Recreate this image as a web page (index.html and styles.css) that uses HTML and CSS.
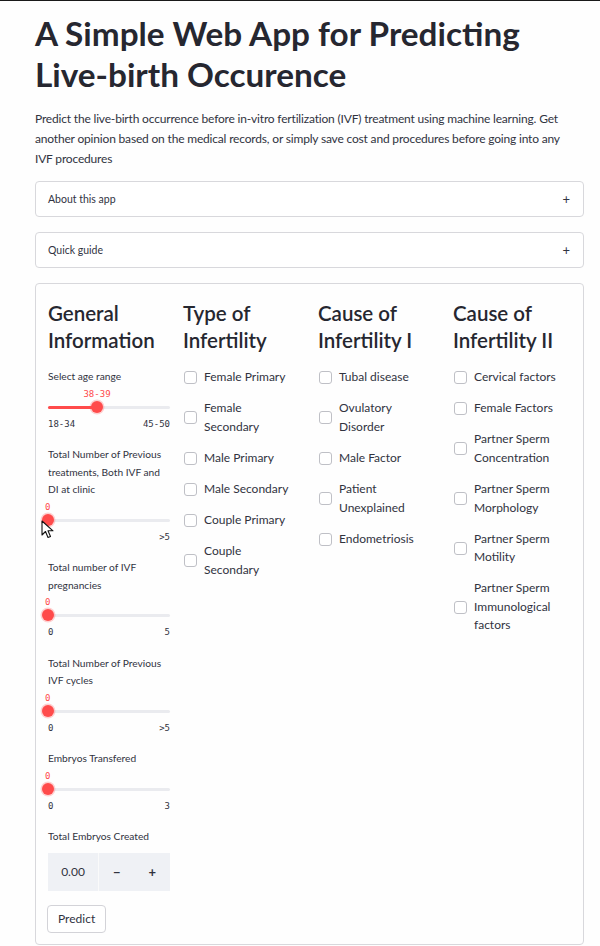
FILE: index.html
```html
<!DOCTYPE html>
<html>
<head>
<meta charset="utf-8">
<link rel="stylesheet" href="styles.css">
</head>
<body>
<main class="main">
  <h1 class="title">A Simple Web App for Predicting<br>Live-birth Occurence</h1>
  <p class="intro"><span>Predict the live-birth occurrence before in-vitro fertilization (IVF) treatment using machine learning. Get</span> <span>another opinion based on the medical records, or simply save cost and procedures before going into any</span> <span>IVF procedures</span></p>

  <div class="expander"><span>About this app</span><span class="plus">+</span></div>
  <div class="expander"><span>Quick guide</span><span class="plus">+</span></div>

  <form class="form">
    <div class="cols">
      <div class="col">
        <h2 class="colhead">General<br>Information</h2>

        <div class="slider">
          <div class="slabel"><span>Select age range</span></div>
          <div class="svalue"><span class="vtext" style="left:49px">38-39</span></div>
          <div class="track"><div class="fill" style="width:49px"></div><div class="thumb" style="left:49px"></div></div>
          <div class="minmax"><span>18-34</span><span>45-50</span></div>
        </div>

        <div class="slider">
          <div class="slabel"><span>Total Number of Previous</span><span>treatments, Both IVF and</span><span>DI at clinic</span></div>
          <div class="svalue"><span class="vtext start">0</span></div>
          <div class="track"><div class="thumb" style="left:0"></div></div>
          <div class="minmax"><span></span><span>&gt;5</span></div>
          <svg class="cursor" width="14" height="20" viewBox="0 0 14 20"><path d="M1 1 L1 15 L4.5 11.5 L7 17.5 L9.5 16.5 L7 10.8 L12 10.8 Z" fill="#fff" stroke="#111" stroke-width="1.1" stroke-linejoin="round"/></svg>
        </div>

        <div class="slider">
          <div class="slabel"><span>Total number of IVF</span><span>pregnancies</span></div>
          <div class="svalue"><span class="vtext start">0</span></div>
          <div class="track"><div class="thumb" style="left:0"></div></div>
          <div class="minmax"><span>0</span><span>5</span></div>
        </div>

        <div class="slider">
          <div class="slabel"><span>Total Number of Previous</span><span>IVF cycles</span></div>
          <div class="svalue"><span class="vtext start">0</span></div>
          <div class="track"><div class="thumb" style="left:0"></div></div>
          <div class="minmax"><span>0</span><span>&gt;5</span></div>
        </div>

        <div class="slider">
          <div class="slabel"><span>Embryos Transfered</span></div>
          <div class="svalue"><span class="vtext start">0</span></div>
          <div class="track"><div class="thumb" style="left:0"></div></div>
          <div class="minmax"><span>0</span><span>3</span></div>
        </div>

        <div class="numfield">
          <div class="slabel"><span>Total Embryos Created</span></div>
          <div class="numinput">
            <div class="numval">0.00</div>
            <div class="numbtns"><span class="minus">−</span><span class="plusb">+</span></div>
          </div>
        </div>

        <button type="button" class="predict">Predict</button>
      </div>

      <div class="col">
        <h2 class="colhead">Type of<br>Infertility</h2>
        <ul class="checks">
          <li><span class="box"></span><span class="ctext"><span>Female Primary</span></span></li>
          <li><span class="box"></span><span class="ctext"><span>Female</span><span>Secondary</span></span></li>
          <li><span class="box"></span><span class="ctext"><span>Male Primary</span></span></li>
          <li><span class="box"></span><span class="ctext"><span>Male Secondary</span></span></li>
          <li><span class="box"></span><span class="ctext"><span>Couple Primary</span></span></li>
          <li><span class="box"></span><span class="ctext"><span>Couple</span><span>Secondary</span></span></li>
        </ul>
      </div>

      <div class="col">
        <h2 class="colhead">Cause of<br>Infertility I</h2>
        <ul class="checks">
          <li><span class="box"></span><span class="ctext"><span>Tubal disease</span></span></li>
          <li><span class="box"></span><span class="ctext"><span>Ovulatory</span><span>Disorder</span></span></li>
          <li><span class="box"></span><span class="ctext"><span>Male Factor</span></span></li>
          <li><span class="box"></span><span class="ctext"><span>Patient</span><span>Unexplained</span></span></li>
          <li><span class="box"></span><span class="ctext"><span>Endometriosis</span></span></li>
        </ul>
      </div>

      <div class="col">
        <h2 class="colhead">Cause of<br>Infertility II</h2>
        <ul class="checks">
          <li><span class="box"></span><span class="ctext"><span>Cervical factors</span></span></li>
          <li><span class="box"></span><span class="ctext"><span>Female Factors</span></span></li>
          <li><span class="box"></span><span class="ctext"><span>Partner Sperm</span><span>Concentration</span></span></li>
          <li><span class="box"></span><span class="ctext"><span>Partner Sperm</span><span>Morphology</span></span></li>
          <li><span class="box"></span><span class="ctext"><span>Partner Sperm</span><span>Motility</span></span></li>
          <li><span class="box"></span><span class="ctext"><span>Partner Sperm</span><span>Immunological</span><span>factors</span></span></li>
        </ul>
      </div>
    </div>
  </form>
</main>
</body>
</html>
```
FILE: styles.css
```css
html, body {
  margin: 0;
  padding: 0;
  background: #fefefe;
}
body {
  border-top: 1px solid #1a1a1a;
  font-family: Lato, "Open Sans", sans-serif;
  color: #31333f;
  height: 945px;
  overflow: hidden;
}
.main {
  padding: 0 16px 0 35px;
}
.title {
  margin: 12px 0 0;
  font-size: 33.3px;
  line-height: 41px;
  font-weight: 700;
  color: #262730;
  white-space: nowrap;
}
.intro {
  margin: 14px 0 12px;
  font-size: 12px;
  letter-spacing: -0.18px;
  line-height: 20px;
  color: #31333f;
  display: flex;
  flex-direction: column;
  white-space: nowrap;
}
.expander {
  height: 34px;
  border: 1px solid #d8d8dc;
  border-radius: 4px;
  background: #fff;
  display: flex;
  align-items: center;
  justify-content: space-between;
  padding: 0 13px 0 12px;
  margin-bottom: 15px;
  font-size: 10.5px;
}
.expander .plus {
  font-size: 13px;
  color: #31333f;
}
.form {
  margin: 13px 0 0;
  border: 1px solid #d8d8dc;
  border-radius: 4px;
  padding: 16px 12px 11px 12px;
}
.cols {
  display: grid;
  grid-template-columns: repeat(4, 122px);
  column-gap: 13px;
}
.col {
  display: flex;
  flex-direction: column;
  align-items: flex-start;
  position: relative;
}
.colhead {
  margin: 0 0 14px;
  font-size: 20.5px;
  line-height: 27px;
  font-weight: 600;
  color: #262730;
  white-space: nowrap;
}
.slider {
  width: 122px;
  margin-bottom: 14.5px;
  position: relative;
}
.slabel {
  display: flex;
  flex-direction: column;
  font-size: 10.2px;
  line-height: 17.5px;
  white-space: nowrap;
  color: #31333f;
}
.svalue {
  height: 16px;
  position: relative;
}
.vtext {
  position: absolute;
  top: 0;
  transform: translateX(-50%);
  font-family: "DejaVu Sans Mono", "Liberation Mono", monospace;
  font-size: 9px;
  line-height: 16px;
  color: #ff4b4b;
}
.vtext.start {
  transform: none;
  left: -3px;
}
.track {
  height: 12px;
  position: relative;
  top: -1px;
}
.track::before {
  content: "";
  position: absolute;
  left: 0;
  right: 0;
  top: 5px;
  height: 3px;
  border-radius: 2px;
  background: #eaebef;
}
.fill {
  position: absolute;
  left: 0;
  top: 5px;
  height: 3px;
  border-radius: 2px;
  background: #ff4b4b;
}
.thumb {
  position: absolute;
  top: 0;
  width: 12px;
  height: 12px;
  margin-left: -6px;
  border-radius: 50%;
  background: #ff4b4b;
  box-shadow: 0 0 0 1.5px rgba(255, 75, 75, 0.25);
}
.minmax {
  margin-top: 2px;
  display: flex;
  justify-content: space-between;
  font-family: "DejaVu Sans Mono", "Liberation Mono", monospace;
  font-size: 9px;
  line-height: 16px;
  color: #31333f;
}
.cursor {
  position: absolute;
  left: -7px;
  top: 74px;
}
.numfield {
  width: 122px;
}
.numinput {
  margin-top: 7px;
  height: 38px;
  display: flex;
  background: #eff1f5;
}
.numval {
  width: 50px;
  display: flex;
  align-items: center;
  justify-content: center;
  font-size: 12px;
  border-right: 1px solid #fafafa;
  color: #31333f;
}
.numbtns {
  flex: 1;
  display: flex;
  align-items: center;
  justify-content: space-around;
  font-size: 13px;
  font-weight: 700;
  color: #31333f;
}
.predict {
  margin-top: 14px;
  height: 28px;
  padding: 0 10px;
  border: 1px solid #d3d3d8;
  border-radius: 4px;
  background: #fff;
  font-family: Lato, "Open Sans", sans-serif;
  font-size: 12px;
  color: #31333f;
  margin-left: -1px;
}
.checks {
  list-style: none;
  margin: 0;
  padding: 0;
  display: flex;
  flex-direction: column;
  gap: 12.7px;
}
.checks li {
  display: flex;
  align-items: center;
  gap: 7px;
  margin-left: 1px;
}
.box {
  width: 11px;
  height: 11px;
  border: 1px solid #bfc0c6;
  border-radius: 3px;
  background: #fff;
  flex: none;
}
.ctext {
  display: flex;
  flex-direction: column;
  font-size: 12px;
  line-height: 18.5px;
  white-space: nowrap;
  color: #31333f;
}
```
